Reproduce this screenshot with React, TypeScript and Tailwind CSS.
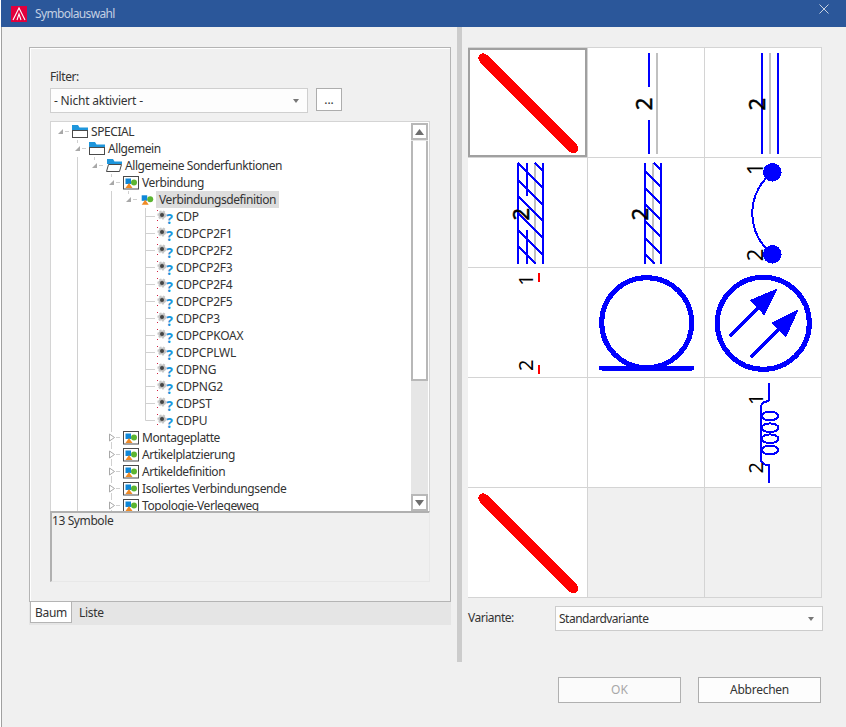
import type { ReactNode } from 'react';

type Kind = 'folder' | 'folderOpen' | 'box' | 'plain' | 'leaf';

interface Node {
  label: string;
  level: number;
  kind: Kind;
  state: 'open' | 'closed' | 'leaf';
  last?: boolean;
  selected?: boolean;
}

const leaves = ['CDP', 'CDPCP2F1', 'CDPCP2F2', 'CDPCP2F3', 'CDPCP2F4', 'CDPCP2F5', 'CDPCP3', 'CDPCPKOAX', 'CDPCPLWL', 'CDPNG', 'CDPNG2', 'CDPST', 'CDPU'];

const nodes: Node[] = [
  { label: 'SPECIAL', level: 0, kind: 'folder', state: 'open' },
  { label: 'Allgemein', level: 1, kind: 'folder', state: 'open' },
  { label: 'Allgemeine Sonderfunktionen', level: 2, kind: 'folderOpen', state: 'open' },
  { label: 'Verbindung', level: 3, kind: 'box', state: 'open' },
  { label: 'Verbindungsdefinition', level: 4, kind: 'plain', state: 'open', selected: true },
  ...leaves.map((label, i): Node => ({ label, level: 5, kind: 'leaf', state: 'leaf', last: i === leaves.length - 1 })),
  { label: 'Montageplatte', level: 3, kind: 'box', state: 'closed' },
  { label: 'Artikelplatzierung', level: 3, kind: 'box', state: 'closed' },
  { label: 'Artikeldefinition', level: 3, kind: 'box', state: 'closed' },
  { label: 'Isoliertes Verbindungsende', level: 3, kind: 'box', state: 'closed' },
  { label: 'Topologie-Verlegeweg', level: 3, kind: 'box', state: 'closed' },
];

function Shapes() {
  return (
    <>
      <rect x="3" y="3" width="5.5" height="5.5" fill="#0f87d8" />
      <circle cx="11.5" cy="7" r="3" fill="#5cb531" />
      <path d="M3 12.5 L6.5 7.5 L10 12.5 Z" fill="#f08a24" />
    </>
  );
}

function NodeIcon({ kind }: { kind: Kind }) {
  return (
    <svg width="16" height="17" viewBox="0 0 16 17" className="shrink-0 overflow-visible">
      {kind === 'folder' && (
        <>
          <path d="M0 7 V2 H6 L7.5 4.5 H16 V7 Z" fill="#1e96dc" />
          <rect x="0.5" y="7.5" width="15" height="7" fill="#fff" stroke="#4a4a4a" />
        </>
      )}
      {kind === 'folderOpen' && (
        <>
          <path d="M1 7 V2 H7 L8.5 4.5 H16 V7 Z" fill="#1e96dc" />
          <path d="M2.5 7.5 H15.5 L13.5 14.5 H0.5 Z" fill="#fff" stroke="#4a4a4a" />
        </>
      )}
      {kind === 'box' && (
        <>
          <rect x="0.5" y="2.5" width="15" height="12.5" fill="#fff" stroke="#4a4a4a" />
          <g transform="translate(-0.5 1.5)"><Shapes /></g>
        </>
      )}
      {kind === 'plain' && <g transform="translate(-1.3 1.3)"><Shapes /></g>}
      {kind === 'leaf' && (
        <>
          <rect x="0" y="2" width="1" height="1" fill="#d02040" />
          <rect x="0" y="12" width="1" height="1" fill="#d02040" />
          <circle cx="5" cy="7" r="3.6" fill="#bdbdbd" stroke="#c8c8c8" strokeWidth="2" strokeDasharray="2 1.5" />
          <circle cx="5" cy="7" r="2" fill="#444" />
          <text x="12.5" y="15.5" textAnchor="middle" fontSize="14" fontWeight="700" fill="#1b96dc" className="font-['Open_Sans']">?</text>
        </>
      )}
    </svg>
  );
}

function Slot({ node }: { node: Node }) {
  return (
    <svg width="21" height="17" viewBox="0 0 21 17" className="shrink-0">
      {node.state === 'leaf' ? (
        <path d={node.last ? 'M9.5 0 V8.5 H19' : 'M9.5 0 V17 M9.5 8.5 H19'} fill="none" stroke="#d0d0d0" />
      ) : (
        <>
          {node.level > 0 && <path d="M9.5 0 V3" stroke="#d0d0d0" />}
          <path d="M14 8.5 H18" stroke="#d0d0d0" />
          {node.state === 'open' ? (
            <path d="M7 11 L12 6 V11 Z" fill="#a8a8a8" />
          ) : (
            <>
              <path d="M7.5 5 L12.5 8.5 L7.5 12 Z" fill="#fff" stroke="#a8a8a8" />
              <path d="M9.5 13 V17" stroke="#d0d0d0" />
            </>
          )}
        </>
      )}
    </svg>
  );
}

function TreeRow({ node }: { node: Node }) {
  const cells = Array.from({ length: node.level }, (_, i) => i);
  return (
    <div className="flex h-[17px] items-stretch whitespace-nowrap">
      {cells.map((i) => (
        <div key={i} className="w-[17px] shrink-0">
          {((i === 1 && node.level > 1) || (i === 3 && node.level > 3)) && (
            <div className="ml-[9px] h-full border-l border-[#d0d0d0]" />
          )}
        </div>
      ))}
      <Slot node={node} />
      <NodeIcon kind={node.kind} />
      <span
        className={`px-[3px] leading-[17px] ${node.kind === 'leaf' ? 'tracking-[-0.25px]' : 'tracking-[-0.42px]'} ${node.selected ? 'bg-[#dddddd]' : ''}`}
      >
        {node.label}
      </span>
    </div>
  );
}

function Num({ x, y, n, size = 20, heavy }: { x: number; y: number; n: string; size?: number; heavy?: boolean }) {
  return (
    <text
      transform={`translate(${x} ${y}) rotate(-90)`}
      textAnchor="middle"
      dominantBaseline="middle"
      fontSize={size}
      fill="#000"
      stroke={heavy ? '#000' : 'none'}
      strokeWidth={heavy ? 0.5 : 0}
      className="font-['Liberation_Sans']"
    >
      {n}
    </text>
  );
}

function Cell({ children, selected, empty }: { children?: ReactNode; selected?: boolean; empty?: boolean }) {
  return (
    <div
      className={`border-r border-b border-[#d4d4d4] ${empty ? 'bg-[#f0f0f0]' : 'bg-white'} ${selected ? 'shadow-[inset_0_0_0_2px_#a0a0a0]' : ''}`}
    >
      {!empty && (
        <svg width="100%" height="109" className="block overflow-hidden" shapeRendering="crispEdges">
          {children}
        </svg>
      )}
    </div>
  );
}

function RedLine() {
  return <path d="M15.3 10.3 L105.3 100.3" stroke="#ff0000" strokeWidth="10" strokeLinecap="round" fill="none" />;
}

function Hatch({ x1, x2, ys }: { x1: number; x2: number; ys: number[] }) {
  const d = ys
    .map((y) => {
      const top = Math.max(y, 5);
      const endY = Math.min(y + (x2 - x1), 105.7);
      return `M${x1 + (top - y)} ${top} L${x1 + (endY - y)} ${endY}`;
    })
    .join(' ');
  return <path d={d} stroke="#0000ff" strokeWidth="2" fill="none" />;
}

function Arrow({ line, head }: { line: string; head: string }) {
  return (
    <>
      <path d={line} stroke="#0000ff" strokeWidth="4" strokeLinecap="round" fill="none" />
      <polygon points={head} fill="#0000ff" stroke="#0000ff" strokeWidth="1" strokeLinejoin="round" />
    </>
  );
}

function Combo({ label, className }: { label: string; className: string }) {
  return (
    <div className={`flex items-center justify-between border bg-[#fdfdfd] pl-[3px] pr-[8px] ${className}`}>
      <span>{label}</span>
      <svg width="6" height="4" viewBox="0 0 6 4"><path d="M0 0 H6 L3 4 Z" fill="#777" /></svg>
    </div>
  );
}

function ScrollBtn({ up }: { up?: boolean }) {
  return (
    <div className="flex h-[17px] items-center justify-center border-2 border-[#b8b8b8] bg-white">
      <svg width="9" height="6" viewBox="0 0 9 6">
        <path d={up ? 'M0 6 H9 L4.5 0 Z' : 'M0 0 H9 L4.5 6 Z'} fill="#6e6e6e" />
      </svg>
    </div>
  );
}

export default function App() {
  return (
    <div className="flex h-[727px] w-[846px] flex-col overflow-hidden bg-white pl-px font-['Roboto',sans-serif] text-[12px] text-[#333]">
      {/* Title bar */}
      <div className="flex h-[27px] shrink-0 items-center bg-[#2b579a] pl-[10px] pr-[17px]">
        <svg width="16" height="16" viewBox="0 0 16 16">
          <rect width="16" height="16" fill="#e2003c" />
          <path d="M2 14 L8 2 L14 14 M6 14 L8 8 L10 14" stroke="#fff" strokeWidth="1.1" fill="none" />
        </svg>
        <span className="ml-[8px] flex-1 tracking-[-0.65px] text-[#c3d0e3]">Symbolauswahl</span>
        <svg width="10" height="10" viewBox="0 0 10 10" className="mb-[10px]">
          <path d="M0.5 0.5 L9.5 9.5 M9.5 0.5 L0.5 9.5" stroke="#c8d2e0" />
        </svg>
      </div>

      <div className="flex flex-1 border-l border-[#a0a0a0] bg-[#f0f0f0]">
        {/* Left: filter, tree, tabs */}
        <div className="w-[455px] shrink-0 pl-[27px] pt-[20px]">
          <div className="h-[555px] w-[422px] border border-[#b4b4b4] pl-[20px] pt-[20px] shadow-[inset_1px_1px_0_#fff]">
            <div className="h-[20px] leading-[18px] tracking-[-0.4px]">Filter:</div>
            <div className="flex items-start">
              <Combo label="- Nicht aktiviert -" className="h-[25px] w-[258px] border-[#cfcfcf] tracking-[-0.2px]" />
              <div className="ml-[8px] flex h-[23px] w-[26px] items-center justify-center border border-[#adadad] bg-white text-[12px]">...</div>
            </div>
            <div className="mt-[8px] flex h-[390px] w-[380px] border border-b-0 border-[#d4d4d4] bg-white">
              <div className="h-full flex-1 overflow-hidden pt-px text-[#333]">
                {nodes.map((n) => (
                  <TreeRow key={n.label} node={n} />
                ))}
              </div>
              <div className="mr-px mt-px flex w-[17px] shrink-0 flex-col bg-[#e6e6e6]">
                <ScrollBtn up />
                <div className="mt-px h-[240px] border-2 border-t-0 border-[#b8b8b8] bg-white" />
                <div className="flex-1" />
                <ScrollBtn />
              </div>
            </div>
            <div className="h-[71px] w-[380px] border-t-2 border-r border-b border-l-2 border-t-[#b0b0b0] border-r-[#e8e8e8] border-b-[#e8e8e8] border-l-[#b0b0b0] leading-[16px] tracking-[-0.4px]">
              13 Symbole
            </div>
          </div>
          <div className="flex h-[23px] w-[422px] bg-[#e5e5e5] tracking-[-0.3px]">
            <div className="ml-px h-[21px] w-[42px] border-x border-b border-[#b4b4b4] bg-white text-center leading-[22px]">Baum</div>
            <div className="ml-[7px] leading-[22px]">Liste</div>
          </div>
        </div>

        {/* Splitter */}
        <div className="h-[635px] w-[5px] shrink-0 bg-[#cccccc]" />

        {/* Right: symbol grid */}
        <div className="flex-1 pl-[6px] pt-[20px]">
          <div className="grid w-[354px] grid-cols-[120px_117px_117px] grid-rows-[repeat(5,110px)] border-t border-[#d4d4d4]">
            <Cell selected><RedLine /></Cell>
            <Cell>
              <path d="M60.7 5 V38.7 M60.7 72 V105.7" stroke="#0000ff" strokeWidth="2" />
              <path d="M69 5 V105.7" stroke="#c0c0c0" strokeWidth="2" />
              <Num x={58} y={56} n="2" size={22} heavy />
            </Cell>
            <Cell>
              <path d="M57 5 V105.7 M73 5 V105.7" stroke="#0000ff" strokeWidth="2" />
              <path d="M65 5 V105.7" stroke="#c0c0c0" strokeWidth="2" />
              <Num x={54} y={56.3} n="2" size={22} heavy />
            </Cell>

            <Cell>
              <path d="M67 5 V105.7" stroke="#c0c0c0" strokeWidth="2" />
              <path d="M50 5 V105.7 M75 5 V105.7 M59 5 V38 M59 72 V105.7" stroke="#0000ff" strokeWidth="2" />
              <Hatch x1={50} x2={75} ys={[-11.67, 5, 21.67, 38.33, 55, 71.67, 88.33]} />
              <Num x={55} y={56.3} n="2" size={22} heavy />
            </Cell>
            <Cell>
              <path d="M65 5 V105.7" stroke="#c0c0c0" strokeWidth="2" />
              <path d="M57 5 V105.7 M73 5 V105.7" stroke="#0000ff" strokeWidth="2" />
              <Hatch x1={57} x2={73} ys={[-3.67, 13, 29.67, 46.33, 63, 79.67, 96.33]} />
              <Num x={54} y={56.3} n="2" size={22} heavy />
            </Cell>
            <Cell>
              <path d="M67.3 14.3 A52 52 0 0 0 67.3 96.3" stroke="#0000ff" strokeWidth="2" fill="none" />
              <circle cx="67.3" cy="14.3" r="9.3" fill="#0000ff" />
              <circle cx="67.3" cy="96.3" r="9.3" fill="#0000ff" />
              <Num x={52} y={11} n="1" size={22} />
              <Num x={52} y={97} n="2" size={22} />
            </Cell>

            <Cell>
              <path d="M71 4.7 V13.7 M71 97 V106" stroke="#ff0000" strokeWidth="2" />
              <Num x={60} y={12} n="1" size={20} />
              <Num x={60} y={97.3} n="2" size={20} />
            </Cell>
            <Cell>
              <circle cx="58.7" cy="54.7" r="45" stroke="#0000ff" strokeWidth="5" fill="none" />
              <path d="M13.5 100 H103.5" stroke="#0000ff" strokeWidth="5" strokeLinecap="round" />
            </Cell>
            <Cell>
              <circle cx="58.3" cy="55.3" r="46" stroke="#0000ff" strokeWidth="5" fill="none" />
              <Arrow line="M26 67 L53 40" head="71.7,21.3 45.7,32.3 59.3,46.7" />
              <Arrow line="M47 88 L75 60" head="92.7,42.3 67.3,54.7 81,68.3" />
            </Cell>

            <Cell />
            <Cell />
            <Cell>
              <path d="M64 5 V21 Q64 23 60 24 Q56 25 56 30 V81 Q56 87 64 87 V105" stroke="#0000ff" strokeWidth="2" fill="none" />
              <ellipse cx="65" cy="38" rx="8.5" ry="4.3" stroke="#0000ff" strokeWidth="2" fill="none" />
              <ellipse cx="65" cy="49.7" rx="8.5" ry="4.3" stroke="#0000ff" strokeWidth="2" fill="none" />
              <ellipse cx="65" cy="60.7" rx="8.5" ry="4.3" stroke="#0000ff" strokeWidth="2" fill="none" />
              <ellipse cx="65" cy="72" rx="8.5" ry="4.3" stroke="#0000ff" strokeWidth="2" fill="none" />
              <Num x={53} y={21.3} n="1" size={20} />
              <Num x={53} y={89.7} n="2" size={20} />
            </Cell>

            <Cell><RedLine /></Cell>
            <Cell empty />
            <Cell empty />
          </div>

          <div className="mt-[8px] flex items-center">
            <span className="w-[87px] pb-[2px] tracking-[-0.5px]">Variante:</span>
            <Combo label="Standardvariante" className="h-[25px] w-[268px] border-[#cccccc] tracking-[-0.5px]" />
          </div>

          <div className="ml-[90px] mt-[46px] flex gap-[17px]">
            <div className="flex h-[26px] w-[123px] items-center justify-center border border-[#b0b0b0] bg-[#fbfbfb] text-[#a8a8a8]">OK</div>
            <div className="flex h-[26px] w-[123px] items-center justify-center border border-[#adadad] bg-[#fdfdfd] tracking-[-0.25px]">Abbrechen</div>
          </div>
        </div>
      </div>
    </div>
  );
}
